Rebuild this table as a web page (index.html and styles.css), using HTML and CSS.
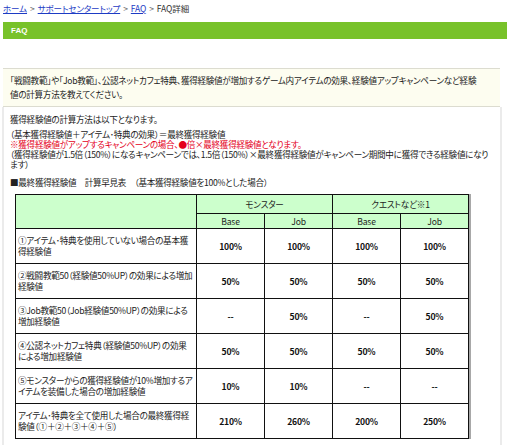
FILE: index.html
```html
<!DOCTYPE html>
<html lang="ja">
<head>
<meta charset="utf-8">
<title>FAQ詳細</title>
<link rel="stylesheet" href="styles.css">
</head>
<body>
<div class="breadcrumb">
  <a href="#">ホーム</a><span class="sep">&gt;</span><a href="#">サポートセンタートップ</a><span class="sep">&gt;</span><a href="#">FAQ</a><span class="sep">&gt;</span><span class="current">FAQ詳細</span>
</div>
<div class="titlebar">FAQ</div>
<div class="question">「戦闘教範」や「Job教範」、公認ネットカフェ特典、獲得経験値が増加するゲーム内アイテムの効果、経験値アップキャンペーンなど経験値の計算方法を教えてください。</div>
<div class="answer">
  <p class="lead">獲得経験値の計算方法は以下となります。</p>
  <p class="formula">（基本獲得経験値＋アイテム･特典の効果）＝最終獲得経験値<br><span class="red">※獲得経験値がアップするキャンペーンの場合、●倍×最終獲得経験値となります。</span><br>（獲得経験値が1.5倍（150%）になるキャンペーンでは、1.5倍（150%）×最終獲得経験値がキャンペーン期間中に獲得できる経験値になります）</p>
  <p class="caption">■最終獲得経験値　計算早見表　（基本獲得経験値を100%とした場合）</p>
  <table class="calc">
    <colgroup><col class="c-label"><col class="c-val"><col class="c-val"><col class="c-val"><col class="c-val"></colgroup>
    <tr class="h1"><th rowspan="2"></th><th colspan="2">モンスター</th><th colspan="2">クエストなど※1</th></tr>
    <tr class="h2"><th>Base</th><th>Job</th><th>Base</th><th>Job</th></tr>
    <tr><td class="label">①アイテム･特典を使用していない場合の基本獲得経験値</td><td>100%</td><td>100%</td><td>100%</td><td>100%</td></tr>
    <tr><td class="label">②戦闘教範50（経験値50%UP）の効果による増加経験値</td><td>50%</td><td>50%</td><td>50%</td><td>50%</td></tr>
    <tr><td class="label">③Job教範50（Job経験値50%UP）の効果による増加経験値</td><td>--</td><td>50%</td><td>--</td><td>50%</td></tr>
    <tr><td class="label">④公認ネットカフェ特典（経験値50%UP）の効果による増加経験値</td><td>50%</td><td>50%</td><td>50%</td><td>50%</td></tr>
    <tr><td class="label">⑤モンスターからの獲得経験値が10%増加するアイテムを装備した場合の増加経験値</td><td>10%</td><td>10%</td><td>--</td><td>--</td></tr>
    <tr><td class="label">アイテム･特典を全て使用した場合の最終獲得経験値（①＋②＋③＋④＋⑤）</td><td>210%</td><td>260%</td><td>200%</td><td>250%</td></tr>
  </table>
</div>
</body>
</html>
```
FILE: styles.css
```css
html, body {
  margin: 0;
  padding: 0;
  background: #ffffff;
}
body {
  font-family: "Noto Sans CJK JP", "Noto Sans", sans-serif;
  font-size: 8.6px;
  letter-spacing: -0.3px;
  color: #222;
  font-feature-settings: "palt";
  width: 507px;
  height: 445px;
  overflow: hidden;
}
.breadcrumb {
  padding: 2px 3px 0 3px;
  height: 15px;
  line-height: 12px;
  font-size: 8.5px;
  letter-spacing: -0.1px;
}
.breadcrumb a {
  color: #1d3bc4;
  text-decoration: underline;
}
.breadcrumb .sep {
  color: #666;
  margin: 0 3px;
}
.breadcrumb .current {
  color: #333;
}
.titlebar {
  margin: 5px 0 0 3px;
  height: 17px;
  line-height: 17px;
  background: #78c22a;
  color: #ffffff;
  font-weight: bold;
  font-size: 8px;
  letter-spacing: 0;
  padding-left: 8px;
  font-family: "Liberation Sans", sans-serif;
}
.question {
  margin: 29px 7px 0 3px;
  background: #fdfdf0;
  border-top: 1px solid #dcdcd0;
  border-bottom: 1px solid #dcdcd0;
  padding: 4px 20px 5px 7px;
  line-height: 14px;
  color: #222;
}
.answer {
  margin: 0 5px 0 2px;
  border-left: 2px solid #ebebeb;
  border-right: 2px solid #ebebeb;
  padding: 7px 8px 8px 6px;
  min-height: 340px;
}
.answer p {
  margin: 0;
  line-height: 10px;
}
.answer .formula {
  margin-top: 5px;
  padding-right: 2px;
}
.answer .red {
  color: #e4001b;
}
.answer .caption {
  margin-top: 8px;
}
.calc {
  margin: 7px 0 0 5px;
  border-collapse: collapse;
  table-layout: fixed;
  width: 454px;
  box-shadow: 2px 0 0 #a8a8a8;
  letter-spacing: -0.2px;
}
.c-label { width: 181px; }
.c-val { width: 68px; }
.calc th, .calc td {
  border: 1px solid #111;
  padding: 0;
  font-size: 8.6px;
  text-align: center;
  vertical-align: middle;
}
.calc th {
  background: #ccffcc;
  font-weight: normal;
  color: #222;
}
.calc .h1 th { height: 18px; }
.calc .h2 th { height: 14px; }
.calc td {
  height: 34px;
  font-weight: bold;
  color: #111;
}
.calc td.label {
  text-align: left;
  font-weight: normal;
  padding: 0 2px 0 2px;
  letter-spacing: -0.3px;
  line-height: 11px;
  color: #222;
}
```
